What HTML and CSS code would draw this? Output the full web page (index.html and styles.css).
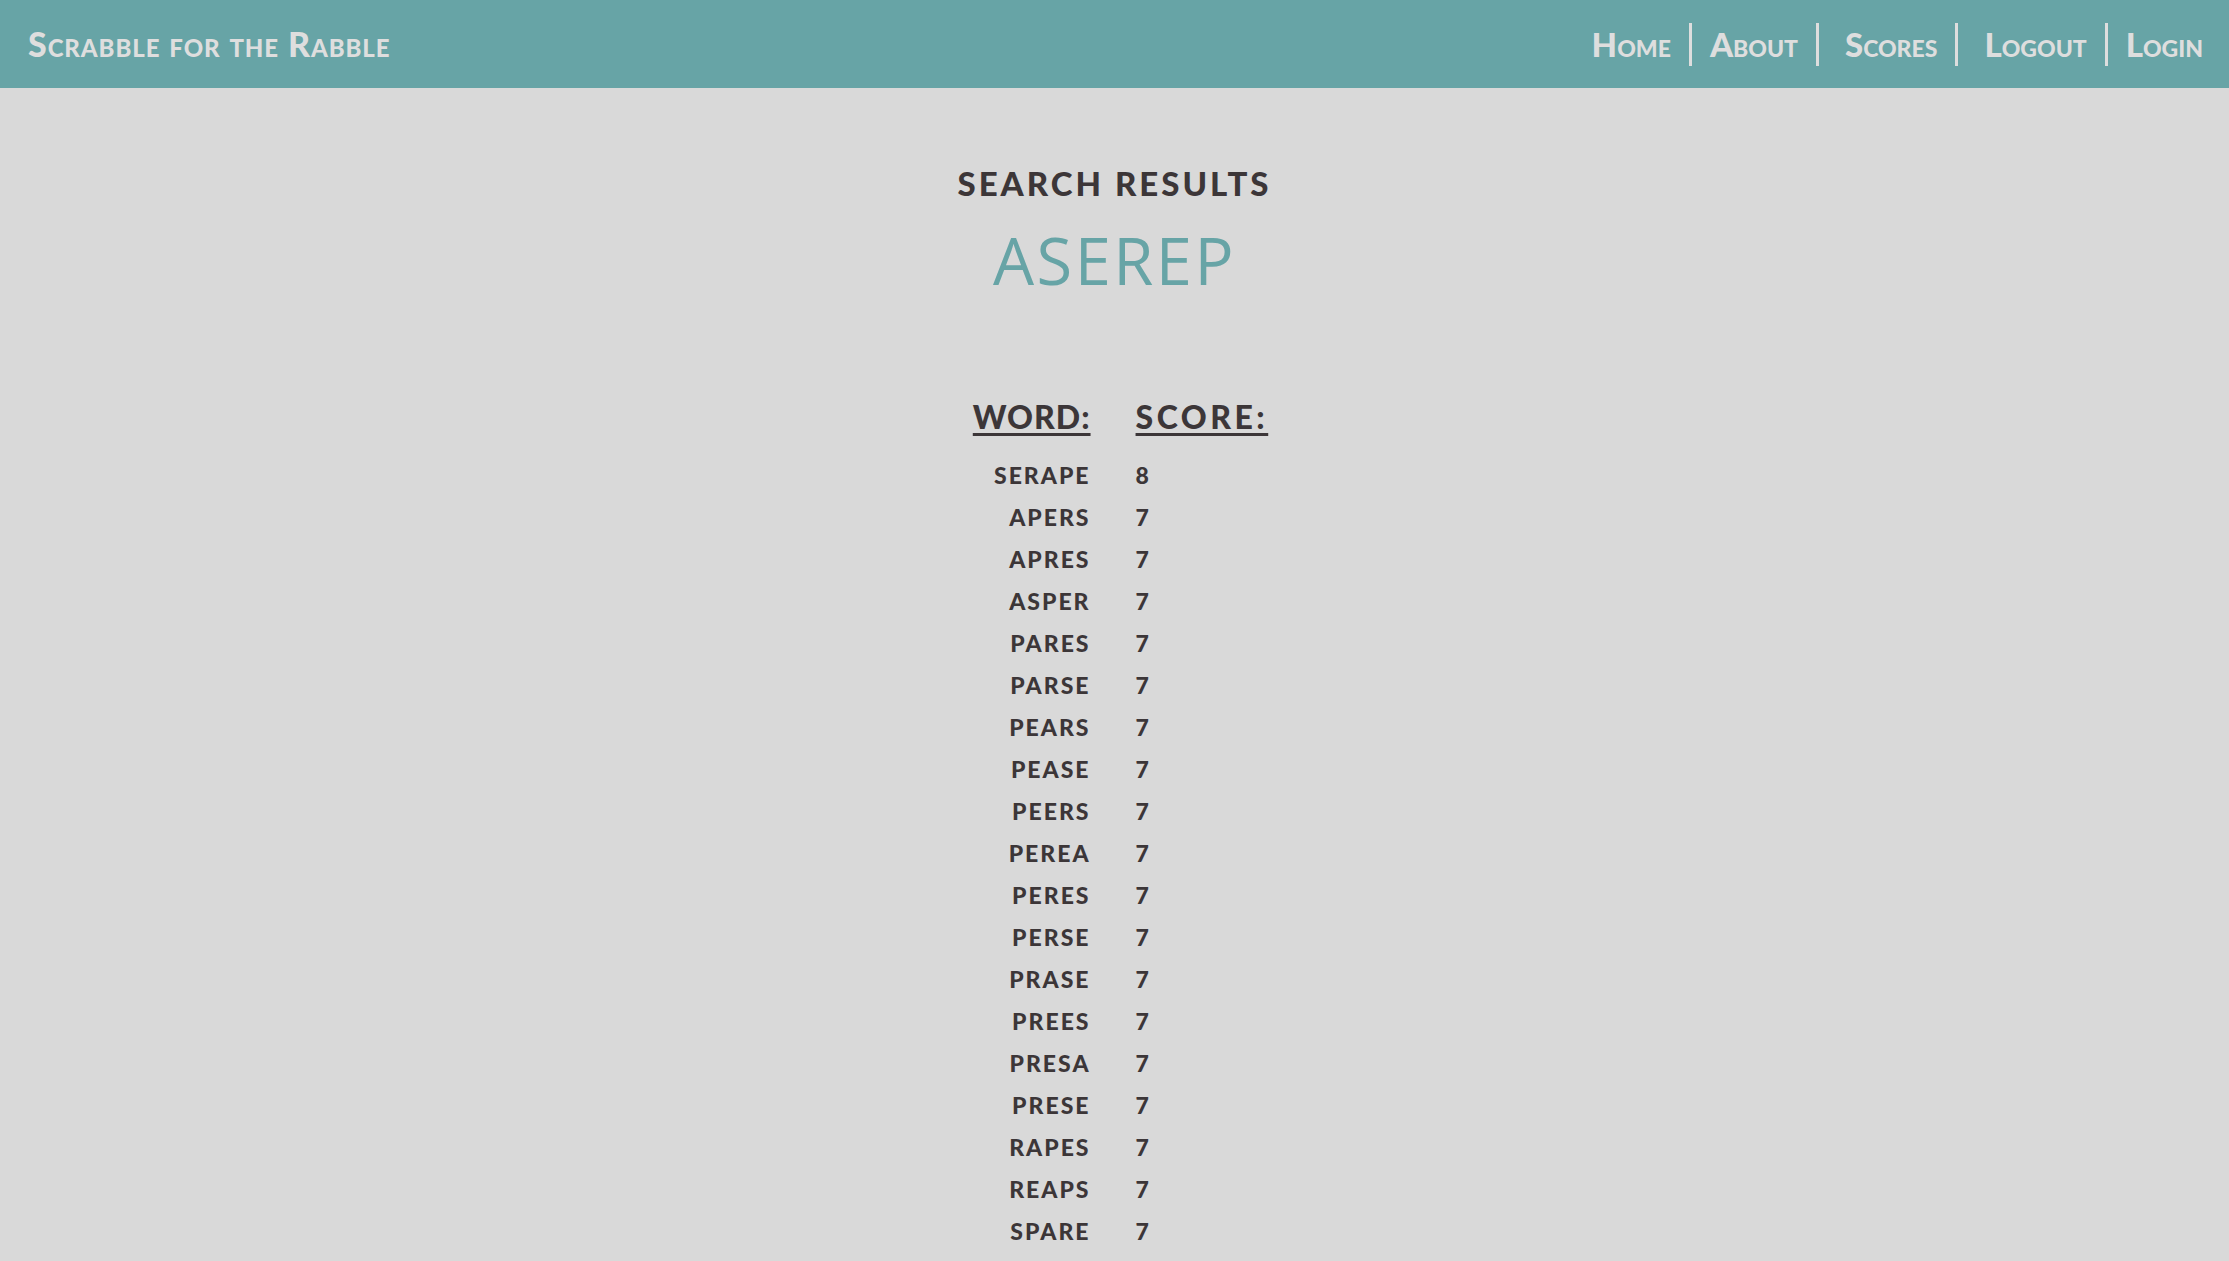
FILE: index.html
```html
<!DOCTYPE html>
<html lang="en">
<head>
<meta charset="utf-8">
<title>Scrabble for the Rabble</title>
<link rel="stylesheet" href="styles.css">
</head>
<body>
<header class="topbar">
  <a class="brand" href="#">Scrabble for the Rabble</a>
  <nav class="nav">
    <a class="nav-link" href="#">Home</a>
    <a class="nav-link" href="#">About</a>
    <a class="nav-link nav-link--wide" href="#">Scores</a>
    <a class="nav-link nav-link--wide" href="#">Logout</a>
    <a class="nav-link" href="#">Login</a>
  </nav>
</header>
<main class="results">
  <h2 class="results-title">SEARCH RESULTS</h2>
  <h1 class="results-query">ASEREP</h1>
  <div class="score-table">
    <div class="head word">WORD:</div><div class="head score head-score">SCORE:</div>
    <div class="word">SERAPE</div><div class="score">8</div>
    <div class="word">APERS</div><div class="score">7</div>
    <div class="word">APRES</div><div class="score">7</div>
    <div class="word">ASPER</div><div class="score">7</div>
    <div class="word">PARES</div><div class="score">7</div>
    <div class="word">PARSE</div><div class="score">7</div>
    <div class="word">PEARS</div><div class="score">7</div>
    <div class="word">PEASE</div><div class="score">7</div>
    <div class="word">PEERS</div><div class="score">7</div>
    <div class="word">PEREA</div><div class="score">7</div>
    <div class="word">PERES</div><div class="score">7</div>
    <div class="word">PERSE</div><div class="score">7</div>
    <div class="word">PRASE</div><div class="score">7</div>
    <div class="word">PREES</div><div class="score">7</div>
    <div class="word">PRESA</div><div class="score">7</div>
    <div class="word">PRESE</div><div class="score">7</div>
    <div class="word">RAPES</div><div class="score">7</div>
    <div class="word">REAPS</div><div class="score">7</div>
    <div class="word">SPARE</div><div class="score">7</div>
    <div class="word">SPEAR</div><div class="score">7</div>
    <div class="word">SPREE</div><div class="score">7</div>
    <div class="word">APER</div><div class="score">6</div>
    <div class="word">APES</div><div class="score">6</div>
  </div>
</main>
</body>
</html>
```
FILE: styles.css
```css
html, body {
  margin: 0;
  padding: 0;
}
body {
  background: #d9d9d9;
  color: #3c3638;
  font-family: "Lato", "Open Sans", sans-serif;
}
.topbar {
  height: 88px;
  background: #67a4a6;
  display: flex;
  align-items: center;
  justify-content: space-between;
  padding: 0 26px 0 28px;
  box-sizing: border-box;
}
.brand, .nav-link {
  font-family: "Lato", sans-serif;
  font-variant: small-caps;
  font-weight: 900;
  font-size: 34px;
  color: #dedede;
  text-decoration: none;
}
.brand {
  line-height: 40px;
  letter-spacing: 0.9px;
}
.nav {
  display: flex;
  align-items: center;
}
.nav-link {
  display: block;
  height: 43px;
  line-height: 43px;
  padding: 0 18px;
  font-size: 33px;
  letter-spacing: 0;
  border-left: 3px solid #dedede;
}
.nav-link:first-child {
  border-left: none;
  padding-left: 0;
}
.nav-link:last-child {
  padding-right: 0;
}
.nav-link--wide {
  padding-left: 26px;
}
.results {
  padding-top: 75px;
  display: flex;
  flex-direction: column;
  align-items: center;
}
.results-title {
  margin: 0;
  font-family: "Lato", sans-serif;
  font-weight: 900;
  font-size: 33px;
  line-height: 40px;
  letter-spacing: 3px;
  color: #3c3638;
}
.results-query {
  margin: 17px 0 0;
  font-family: "Open Sans", sans-serif;
  font-weight: normal;
  font-size: 65px;
  line-height: 80px;
  letter-spacing: 2.5px;
  color: #67a4a6;
}
.score-table {
  margin-top: 97px;
  margin-left: 12px;
  display: grid;
  grid-template-columns: auto auto;
  column-gap: 45px;
  font-family: "Lato", sans-serif;
  font-weight: 900;
  font-size: 23px;
  line-height: 42px;
  letter-spacing: 2px;
  color: #3c3638;
}
.word {
  text-align: right;
}
.score {
  text-align: left;
}
.head {
  font-size: 32px;
  line-height: 40px;
  letter-spacing: 1px;
  text-decoration: underline;
  text-decoration-thickness: 3px;
  text-underline-offset: 4px;
  padding-bottom: 17px;
}
.head-score {
  letter-spacing: 3.5px;
}
```
